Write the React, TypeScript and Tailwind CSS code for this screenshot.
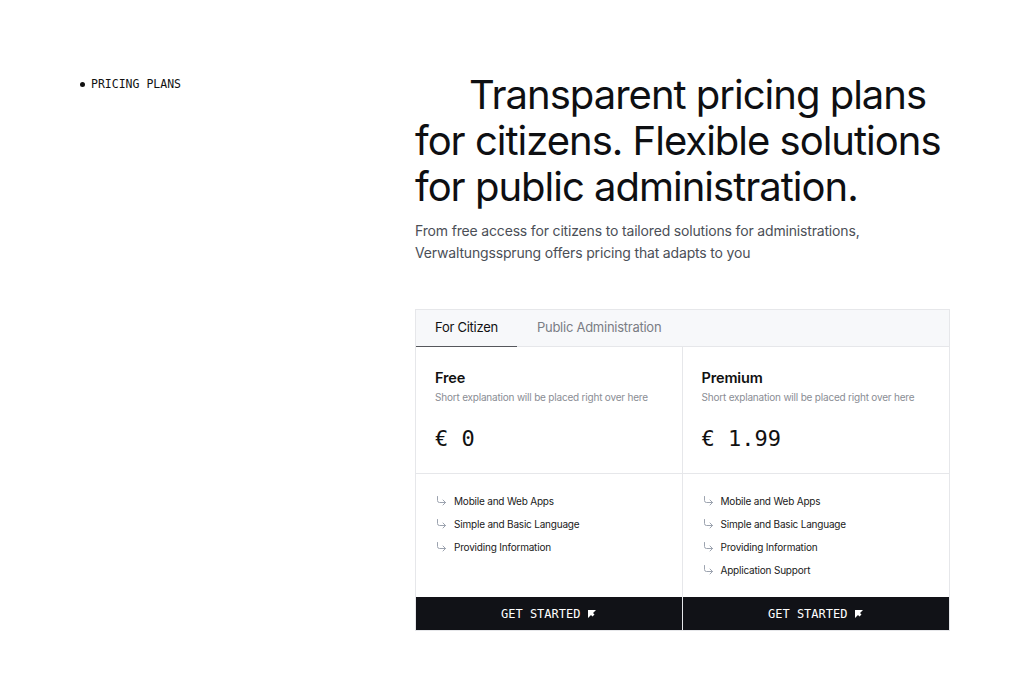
import React from "react";

const mono = { fontFamily: '"DejaVu Sans Mono", "Liberation Mono", monospace' };

function Arrow() {
  return (
    <svg width="11" height="10" viewBox="0 0 11 10" fill="none" className="shrink-0">
      <path d="M1.5 0.5 V4.5 Q1.5 6.5 3.5 6.5 H9.5 M7 4 L9.5 6.5 L7 9" stroke="#9ca3af" strokeWidth="1" strokeLinecap="round" strokeLinejoin="round" />
    </svg>
  );
}

function Tri() {
  return (
    <svg width="8" height="8" viewBox="0 0 8 8">
      <polygon points="0,0 8,0 5,3 6.5,4.5 4.5,6.5 3,5 0,8" fill="#fff" />
    </svg>
  );
}

type Plan = { name: string; price: string; features: string[] };

const plans: Plan[] = [
  { name: "Free", price: "€ 0", features: ["Mobile and Web Apps", "Simple and Basic Language", "Providing Information"] },
  {
    name: "Premium",
    price: "€ 1.99",
    features: ["Mobile and Web Apps", "Simple and Basic Language", "Providing Information", "Application Support"],
  },
];

export default function App() {
  return (
    <div className="min-h-[700px] w-full bg-white" style={{ fontFamily: 'Inter, "Noto Sans", sans-serif' }}>
      <div className="flex pl-[80px] pt-[72px]">
        <div className="w-[335px] shrink-0 pt-[4px]">
          <div className="flex items-center gap-[6px] text-[11.5px] text-[#111]" style={mono}>
            <span className="inline-block h-[5px] w-[5px] rounded-full bg-[#111]" />
            PRICING PLANS
          </div>
        </div>
        <div className="w-[535px] shrink-0">
          <h1 className="w-[560px] text-[40px] leading-[46px] tracking-[-0.025em] text-[#0e0f12] indent-[54px] font-normal">
            Transparent pricing plans for citizens. Flexible solutions for public administration.
          </h1>
          <p className="mt-[10px] w-[520px] text-[14px] leading-[22px] tracking-[-0.012em] text-[#4b4f57]">
            From free access for citizens to tailored solutions for administrations,
            <br />
            Verwaltungssprung offers pricing that adapts to you
          </p>
          <div className="mt-[45px] border border-[#e6e7ea]">
            <div className="flex h-[37px] bg-[#f7f8fa] border-b border-[#e6e7ea] text-[13px] tracking-[-0.02em]">
              <div className="relative flex items-center px-[19px] text-[#111]">
                For Citizen
                <span className="absolute bottom-[-1px] left-0 right-0 h-[1.5px] bg-[#55575c]" />
              </div>
              <div className="flex items-center px-[20px] text-[#7a7d84]">Public Administration</div>
            </div>
            <div className="grid grid-cols-2">
              {plans.map((p, i) => (
                <div key={p.name} className={`flex flex-col ${i === 0 ? "border-r border-[#e6e7ea]" : ""}`}>
                  <div className="border-b border-[#e6e7ea] px-[19px] pt-[21px] pb-[20px]">
                    <div className="text-[14.5px] font-semibold leading-[20px] tracking-[-0.01em] text-[#111]">{p.name}</div>
                    <div className="mt-[1px] text-[10px] leading-[16px] tracking-[-0.02em] text-[#8a8d94]">
                      Short explanation will be placed right over here
                    </div>
                    <div className="mt-[20px] text-[22px] leading-[28px] text-[#111]" style={mono}>
                      {p.price}
                    </div>
                  </div>
                  <div className="flex flex-1 flex-col gap-[9px] px-[20px] pt-[20px] pb-[20px]">
                    {p.features.map((f) => (
                      <div key={f} className="flex items-center gap-[7px] text-[10px] leading-[14px] tracking-[-0.02em] text-[#1a1a1a]">
                        <Arrow />
                        {f}
                      </div>
                    ))}
                  </div>
                  <button
                    className="flex h-[33px] items-center justify-center gap-[8px] bg-[#111217] text-[12px] text-white"
                    style={mono}
                  >
                    GET STARTED
                    <Tri />
                  </button>
                </div>
              ))}
            </div>
          </div>
        </div>
      </div>
    </div>
  );
}
